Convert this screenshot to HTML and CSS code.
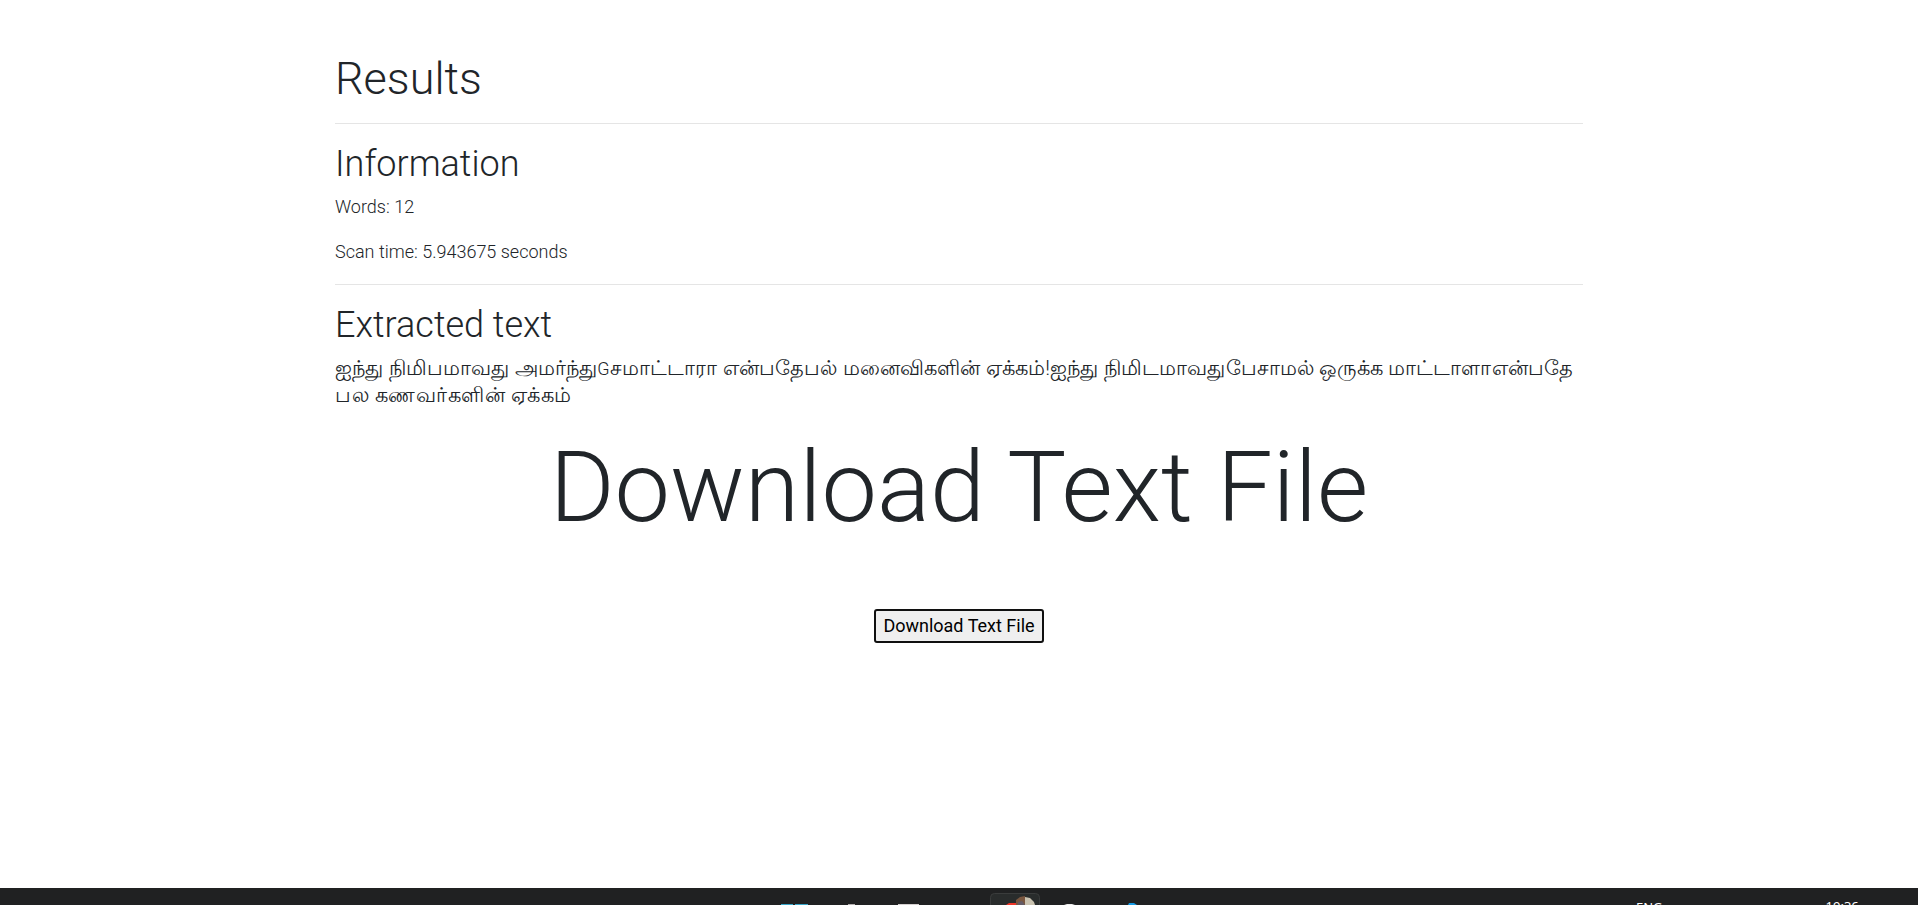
FILE: index.html
```html
<!DOCTYPE html>
<html lang="en">
<head>
<meta charset="utf-8">
<title>Results</title>
<link rel="stylesheet" href="styles.css">
</head>
<body>
<main class="container">
  <h1 class="title">Results</h1>
  <hr class="rule rule-title">
  <h2 class="heading">Information</h2>
  <p class="text">Words: 12</p>
  <p class="text text-last">Scan time: 5.943675 seconds</p>
  <hr class="rule">
  <h2 class="heading">Extracted text</h2>
  <p class="text tamil" lang="ta"><span class="line line-long">ஐந்து நிமிபமாவது அமர்ந்து<span class="latin">G</span>சமாட்டாரா என்பதேபல் மனைவிகளின் ஏக்கம்!ஐந்து நிமிடமாவதுபேசாமல் ஒருக்க மாட்டாளாஎன்பதே</span> <span class="line line-short">பல கணவர்களின் ஏக்கம்</span></p>
  <section class="download">
    <div class="display">Download Text File</div>
    <button class="button" type="button">Download Text File</button>
  </section>
</main>
<footer class="taskbar">
  <svg class="icons" width="400" height="17" viewBox="0 0 400 17">
    <rect x="230.500" y="5.500" width="49" height="30" rx="4" fill="#292c2c" stroke="#3a3c3c"/>
    <path d="M21 16h12v1H21zM35 16h13v1H35z" fill="#38a6c9"/>
    <path d="M88 16h7v1h-7z" fill="#b5b0b0"/>
    <path d="M138 16h21v1h-21z" fill="#d5d0d0"/>
    <path d="M246 17l3-2h8v2z" fill="#ee3528"/>
    <path d="M256 17v-5l4-3 5-1v9z" fill="#79563f"/>
    <path d="M258 17v-3l4-1 3 4z" fill="#635b66"/>
    <path d="M265 17V9l5 1 4 4 1 3z" fill="#c9c2b0"/>
    <path d="M304 17l3-1h5l3 1z" fill="#eee"/>
    <path d="M368 17l1-2h5l3 2z" fill="#159be5"/>
  </svg>
  <span class="language">ENG</span>
  <span class="clock">19:36</span>
</footer>
</body>
</html>
```
FILE: styles.css
```css
* { box-sizing: border-box; }
html { font-size: 18px; }
body {
  margin: 0;
  height: 905px;
  overflow: hidden;
  display: flex;
  flex-direction: column;
  background: #fff;
  color: #212529;
  font-family: Roboto, "Noto Sans", sans-serif;
  font-weight: 300;
  line-height: 1.5;
}
.container {
  width: 1248px;
  height: 888px;
  margin: 0 auto;
  padding-top: 52px;
}
.title, .heading { margin: 0 0 7px; font-weight: 300; line-height: 1.2; }
.title { font-size: 45px; margin-bottom: 0; }
.heading { font-size: 36px; }
.rule { margin: 18px 0 19px; border: 0; border-top: 1px solid rgba(0, 0, 0, 0.1); }
.rule-title { margin-top: 17px; }
.text { margin: 0 0 18px; }
.text-last { margin-bottom: 19px; }
.tamil { padding-top: 1px; font-size: 21px; line-height: 27px; }
.latin { font-size: 18px; }
.line { display: block; width: max-content; white-space: nowrap; }
.line-long { letter-spacing: 0.13px; }
.line-short { letter-spacing: 0.5px; }
.download { display: flex; flex-direction: column; align-items: center; }
.display { font-size: 99px; line-height: 120px; white-space: nowrap; }
.button {
  width: 170px;
  height: 34px;
  margin-top: 62px;
  padding: 0 0 1px;
  border: 2px solid #101010;
  border-radius: 3px;
  background: #efefef;
  color: #000;
  font: 400 18px/27px Roboto, sans-serif;
}
.taskbar {
  height: 17px;
  flex: none;
  overflow: hidden;
  display: flex;
  background: #202122;
  color: #fff;
  font: 400 12px/16px "Noto Sans", sans-serif;
}
.icons { flex: none; margin-left: 760px; }
.language { margin: 11px 0 0 476px; font-size: 13px; }
.clock { margin: 10px 0 0 163px; font-size: 13px; }
```
